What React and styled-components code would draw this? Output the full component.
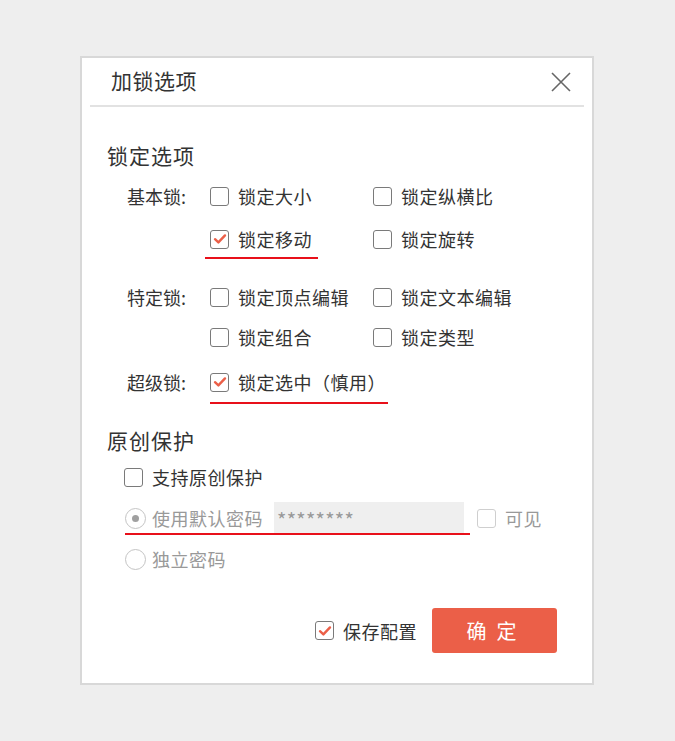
import styled, { createGlobalStyle } from "styled-components"

const GlobalStyle = createGlobalStyle`
  body {
    margin: 0;
    background: #eeeeee;
    font-family: "Noto Sans CJK SC", "Noto Sans", sans-serif;
    color: #333;
  }
`

const Page = styled.div`
  padding: 56px 0 0 80px;
  height: 741px;
  box-sizing: border-box;
`

const Dialog = styled.div`
  width: 514px;
  height: 629px;
  box-sizing: border-box;
  background: #fff;
  border: 2px solid #d8d8d8;
  display: flex;
  flex-direction: column;
`

const Header = styled.div`
  margin: 0 8px;
  height: 47px;
  border-bottom: 2px solid #e2e2e2;
  display: flex;
  align-items: center;
  justify-content: space-between;
  padding: 0 12px 0 21px;
`

const Title = styled.div`
  font-size: 21px;
  line-height: 26px;
  letter-spacing: 0.5px;
  color: #333;
  margin-top: -3px;
`

const CloseButton = styled.button`
  border: none;
  background: none;
  padding: 0;
  width: 22px;
  height: 22px;
  cursor: pointer;
`

const Body = styled.div`
  padding: 0 0 0 25px;
  flex: 1;
  display: flex;
  flex-direction: column;
`

const SectionTitle = styled.div`
  font-size: 21px;
  line-height: 26px;
  letter-spacing: 1px;
  margin-top: ${props => props.$top}px;
`

const Group = styled.div`
  display: grid;
  grid-template-columns: 83px 163px 1fr;
  margin-top: ${props => props.$top}px;
  padding-left: 20px;
  row-gap: ${props => props.$gap}px;
`

const GroupLabel = styled.div`
  font-size: 18px;
  height: 40px;
  display: flex;
  align-items: center;
`

const Option = styled.label`
  position: relative;
  height: 40px;
  display: flex;
  align-items: center;
  gap: 9px;
  font-size: 18px;
  letter-spacing: 0.5px;
  color: ${props => (props.$muted ? "#999" : "#333")};
  white-space: nowrap;
`

// red annotation line drawn under a highlighted item
const Underline = styled.span`
  position: absolute;
  left: ${props => props.$left}px;
  bottom: ${props => props.$bottom}px;
  width: ${props => props.$width}px;
  height: 2px;
  background: #e8101a;
`

const Box = styled.span`
  width: 19px;
  height: 19px;
  box-sizing: border-box;
  border: 1.5px solid ${props => (props.$disabled ? "#cfcfcf" : "#7a7a7a")};
  border-radius: 3px;
  display: flex;
  align-items: center;
  justify-content: center;
  flex-shrink: 0;
`

const Radio = styled.span`
  width: 21px;
  height: 21px;
  box-sizing: border-box;
  border: 1.5px solid #c4c4c4;
  border-radius: 50%;
  display: flex;
  align-items: center;
  justify-content: center;
  flex-shrink: 0;

  &::after {
    content: "";
    width: 7px;
    height: 7px;
    border-radius: 50%;
    background: ${props => (props.$on ? "#a0a0a0" : "transparent")};
  }
`

const ProtectList = styled.div`
  padding-left: 17px;
  margin-top: 4px;
  display: flex;
  flex-direction: column;
  gap: 1px;
`

const ProtectRow = styled.div`
  display: flex;
  align-items: center;
  height: 40px;
  position: relative;
`

const RadioOption = styled(Option)`
  gap: 6px;
  margin-left: 1px;
`

const PasswordInput = styled.div`
  margin-left: 11px;
  width: 190px;
  height: 33px;
  background: #efefef;
  color: #999;
  font-size: 20px;
  line-height: 36px;
  padding-left: 3px;
  box-sizing: border-box;
  letter-spacing: 0.3px;
`

const VisibleOption = styled(Option)`
  margin-left: 13px;
  gap: 9px;
`

const Footer = styled.div`
  margin-top: auto;
  margin-bottom: 30px;
  padding-right: 35px;
  display: flex;
  justify-content: flex-end;
  align-items: center;
  gap: 15px;
`

const ConfirmButton = styled.button`
  width: 125px;
  height: 45px;
  border: none;
  border-radius: 3px;
  background: #eb5f48;
  color: #fff;
  font-family: inherit;
  font-size: 20px;
  letter-spacing: 10px;
  padding-left: 10px;
  cursor: pointer;
`

function Check({ on, disabled }) {
  return (
    <Box $disabled={disabled}>
      {on && (
        <svg width="14" height="12" viewBox="0 0 14 12">
          <path d="M2 6.2 L5.4 9.4 L12 2.4" fill="none" stroke="#eb5f48" strokeWidth="2.4" strokeLinecap="round" strokeLinejoin="round" />
        </svg>
      )}
    </Box>
  )
}

function App() {
  return (
    <Page>
      <GlobalStyle />
      <Dialog>
        <Header>
          <Title>加锁选项</Title>
          <CloseButton>
            <svg width="22" height="22" viewBox="0 0 22 22">
              <path d="M2 2 L20 20 M20 2 L2 20" stroke="#666" strokeWidth="1.6" />
            </svg>
          </CloseButton>
        </Header>
        <Body>
          <SectionTitle $top={35}>锁定选项</SectionTitle>
          <Group $top={8} $gap={3}>
            <GroupLabel>基本锁:</GroupLabel>
            <Option><Check />锁定大小</Option>
            <Option><Check />锁定纵横比</Option>
            <span />
            <Option>
              <Check on />锁定移动
              <Underline $left={-5} $bottom={0} $width={113} />
            </Option>
            <Option><Check />锁定旋转</Option>
          </Group>
          <Group $top={18} $gap={0}>
            <GroupLabel>特定锁:</GroupLabel>
            <Option><Check />锁定顶点编辑</Option>
            <Option><Check />锁定文本编辑</Option>
            <span />
            <Option><Check />锁定组合</Option>
            <Option><Check />锁定类型</Option>
          </Group>
          <Group $top={5} $gap={0}>
            <GroupLabel>超级锁:</GroupLabel>
            <Option>
              <Check on />锁定选中（慎用）
              <Underline $left={0} $bottom={-2} $width={178} />
            </Option>
          </Group>
          <SectionTitle $top={25}>原创保护</SectionTitle>
          <ProtectList>
            <ProtectRow>
              <Option><Check />支持原创保护</Option>
            </ProtectRow>
            <ProtectRow>
              <RadioOption $muted><Radio $on />使用默认密码</RadioOption>
              <PasswordInput>********</PasswordInput>
              <VisibleOption $muted><Check disabled />可见</VisibleOption>
              <Underline $left={1} $bottom={3} $width={345} />
            </ProtectRow>
            <ProtectRow>
              <RadioOption $muted><Radio />独立密码</RadioOption>
            </ProtectRow>
          </ProtectList>
          <Footer>
            <Option><Check on />保存配置</Option>
            <ConfirmButton>确定</ConfirmButton>
          </Footer>
        </Body>
      </Dialog>
    </Page>
  )
}

export default App
